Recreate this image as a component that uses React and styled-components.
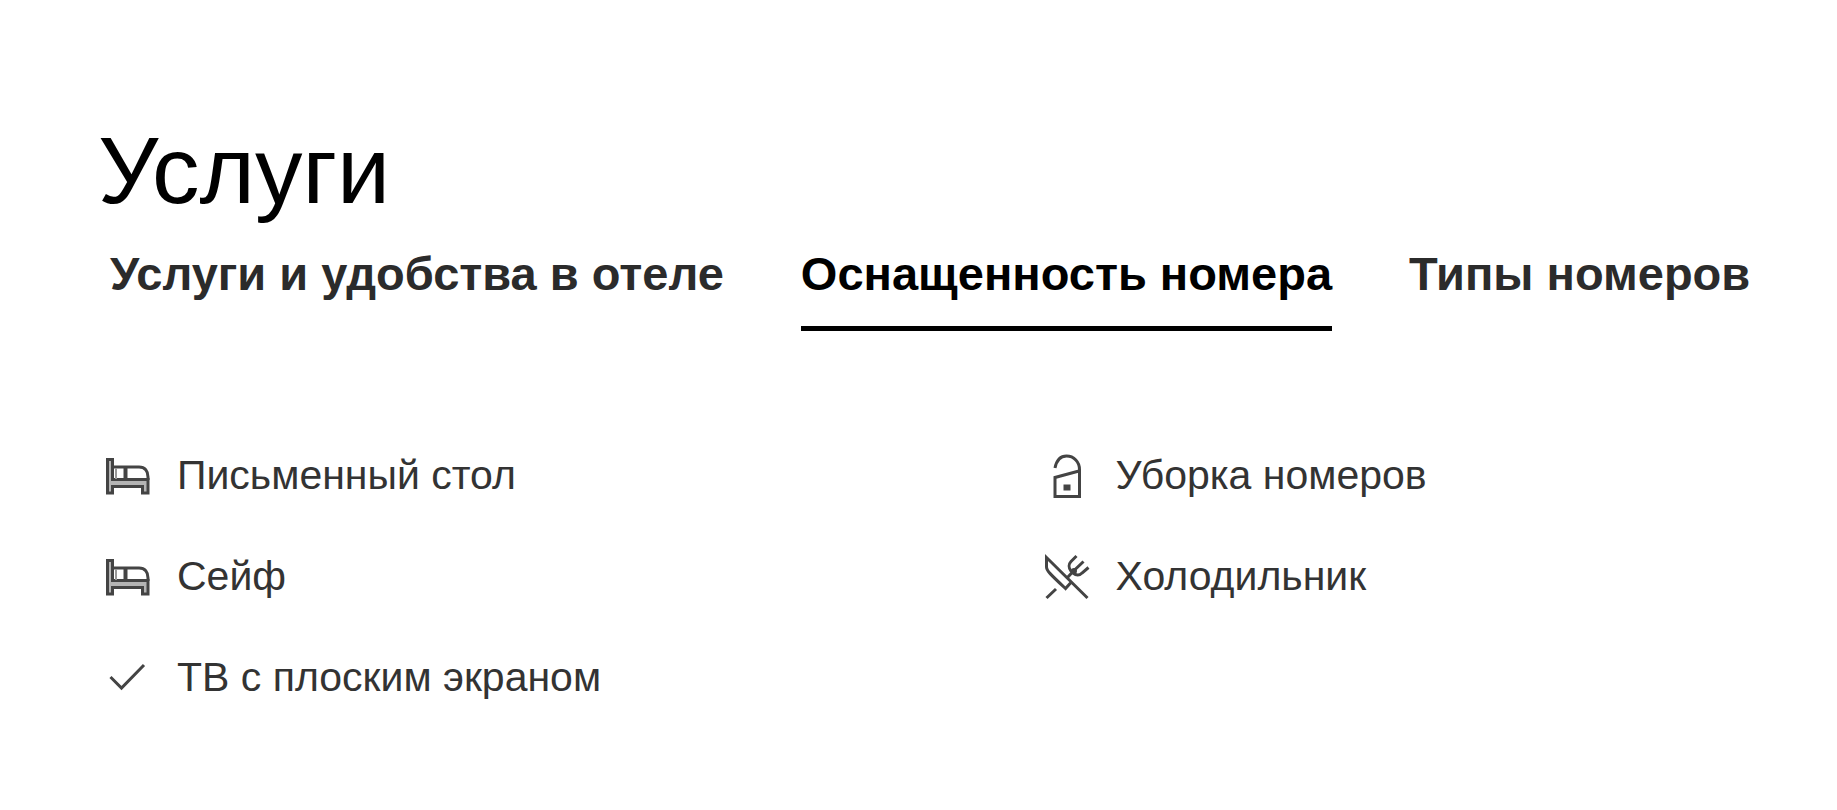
import React, { useState } from "react";
import styled, { createGlobalStyle } from "styled-components";

const GlobalStyle = createGlobalStyle`
  body {
    margin: 0;
    background: #ffffff;
    font-family: "Liberation Sans", Arial, sans-serif;
  }
`;

const tabs = ["Услуги и удобства в отеле", "Оснащенность номера", "Типы номеров"];

const amenities = [
  { icon: BedIcon, label: "Письменный стол" },
  { icon: DoorHangerIcon, label: "Уборка номеров" },
  { icon: BedIcon, label: "Сейф" },
  { icon: CutleryIcon, label: "Холодильник" },
  { icon: CheckIcon, label: "ТВ с плоским экраном" }
];

export default function App() {
  const [active, setActive] = useState(1);

  return (
    <>
      <GlobalStyle />
      <Section>
        <Title>Услуги</Title>
        <Tabs role="tablist">
          {tabs.map((tab, index) => (
            <Tab
              key={tab}
              type="button"
              role="tab"
              aria-selected={index === active}
              $active={index === active}
              onClick={() => setActive(index)}
            >
              {tab}
            </Tab>
          ))}
        </Tabs>
        <AmenityList>
          {amenities.map(({ icon: Icon, label }) => (
            <Amenity key={label}>
              <Icon />
              {label}
            </Amenity>
          ))}
        </AmenityList>
      </Section>
    </>
  );
}

function BedIcon() {
  return (
    <StyledIcon viewBox="0 0 48 48" aria-hidden="true">
      <path
        d="M3.5 8.5H8.5V28.5H44V42H38.5V35.5H8.5V42H3.5Z"
        fill="#b4b4b4"
      />
      <path d="M8.5 16H35C41 16 44 20 44 26V29" />
      <path d="M12 17V28" stroke="#999999" strokeWidth="2" />
      <path d="M21.5 16V29" strokeWidth="4" />
    </StyledIcon>
  );
}

function DoorHangerIcon() {
  return (
    <StyledIcon viewBox="0 0 48 48" aria-hidden="true">
      <path d="M12 17C13.5 9.5 17.5 5 23.5 5C31 5 36.5 11 36.5 18.5V45.5H12V26.5L36 20" />
      <rect x="22" y="35" width="4" height="3" />
    </StyledIcon>
  );
}

function CutleryIcon() {
  return (
    <StyledIcon viewBox="0 0 48 48" aria-hidden="true">
      <path d="M44.5 46L3.5 5.5V15C3.5 18.5 7 22 22.5 36.5L27.5 31M3.5 46L13 37" />
      <path d="M33.5 4L28 9.5C25.5 12 25.5 16 28 19L30 21C33 23.5 36.5 23.5 39 21L45.5 15.5M40.5 9.5L30 19.5L24.5 25.5" />
      <circle cx="31" cy="19" r="1.5" />
    </StyledIcon>
  );
}

function CheckIcon() {
  return (
    <StyledIcon viewBox="0 0 48 48" aria-hidden="true">
      <path d="M6.5 24L17.5 35L40 12" />
    </StyledIcon>
  );
}

const Section = styled.section`
  padding: 114px 64px 80px 98px;
`;

const Title = styled.h2`
  margin: 0;
  font-size: 95px;
  line-height: 112px;
  font-weight: 400;
  color: #000000;
`;

const Tabs = styled.div`
  display: flex;
  gap: 77px;
  padding: 20px 0 0 12px;
`;

const Tab = styled.button`
  padding: 0 0 24px;
  border: 0;
  border-bottom: 5px solid ${({ $active }) => ($active ? "#000000" : "transparent")};
  background: none;
  font-family: inherit;
  font-size: 47px;
  line-height: 56px;
  font-weight: 700;
  white-space: nowrap;
  color: ${({ $active }) => ($active ? "#000000" : "#2b2b2b")};
  cursor: pointer;
`;

const AmenityList = styled.ul`
  display: grid;
  grid-template-columns: 1fr 1fr;
  gap: 53px 208px;
  margin: 120px 0 0;
  padding: 0 0 0 6px;
  list-style: none;
`;

const Amenity = styled.li`
  display: flex;
  align-items: center;
  gap: 25px;
  font-size: 41px;
  line-height: 48px;
  white-space: nowrap;
  color: #333333;
`;

const StyledIcon = styled.svg`
  flex: none;
  width: 48px;
  height: 48px;
  fill: none;
  stroke: #444444;
  stroke-width: 3;
`;
